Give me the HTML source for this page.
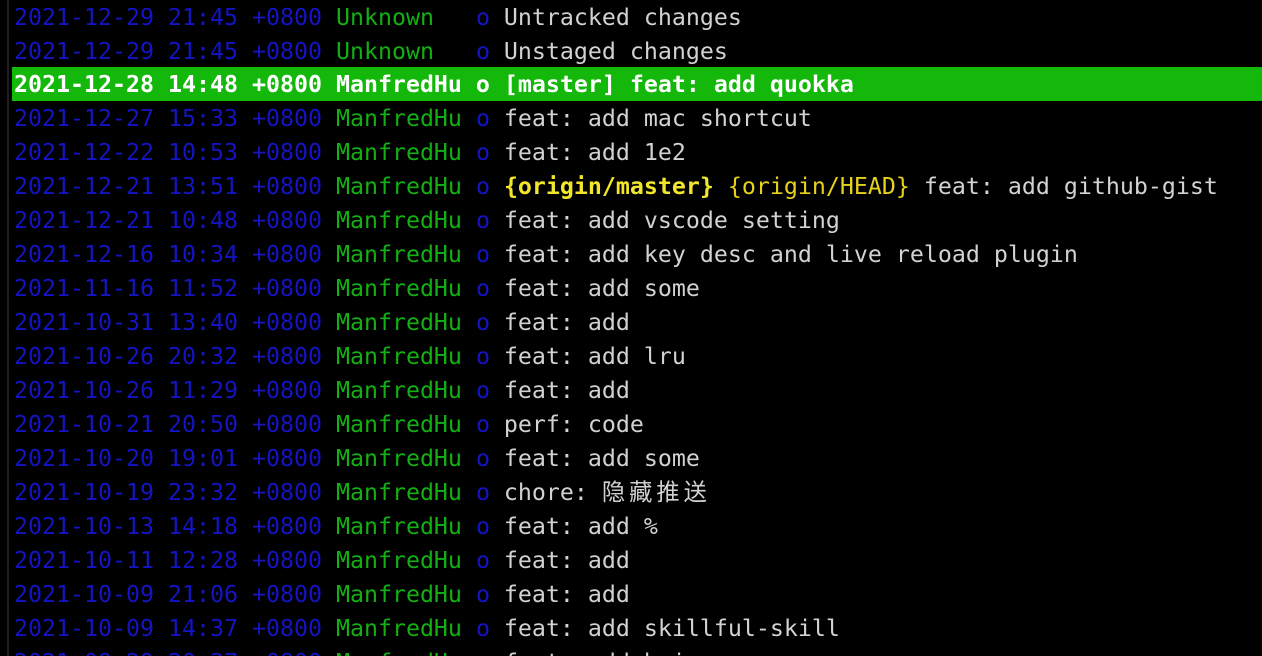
<!DOCTYPE html>
<html><head><meta charset="utf-8"><style>
html,body{margin:0;padding:0;background:#000;width:1262px;height:656px;overflow:hidden}
body{font-family:"DejaVu Sans Mono","Liberation Mono","Noto Sans CJK SC",monospace;font-size:23.25px;position:relative}
.bar{position:absolute;left:7px;top:0;width:2px;height:656px;background:#1e1e1e}
.r{position:absolute;left:14px;height:34px;line-height:36px;white-space:pre;color:#d2d2d2}
.d{color:#1414c4}.a{color:#12b012}.o{color:#1414c4}.y{color:#e6d21a}.yb{color:#f2e62a;font-weight:bold}
.h{left:12px;right:0;padding-left:2px;background:#13b80b;color:#fff;font-weight:bold;line-height:35px}
.cjk{letter-spacing:4px}
</style></head><body>
<div class="bar"></div>
<div class="r" style="top:0"><span class="d">2021-12-29 21:45 +0800</span> <span class="a">Unknown  </span> <span class="o">o</span> Untracked changes</div>
<div class="r" style="top:34px"><span class="d">2021-12-29 21:45 +0800</span> <span class="a">Unknown  </span> <span class="o">o</span> Unstaged changes</div>
<div class="r h" style="top:67px">2021-12-28 14:48 +0800 ManfredHu o [master] feat: add quokka</div>
<div class="r" style="top:101px"><span class="d">2021-12-27 15:33 +0800</span> <span class="a">ManfredHu</span> <span class="o">o</span> feat: add mac shortcut</div>
<div class="r" style="top:135px"><span class="d">2021-12-22 10:53 +0800</span> <span class="a">ManfredHu</span> <span class="o">o</span> feat: add 1e2</div>
<div class="r" style="top:169px"><span class="d">2021-12-21 13:51 +0800</span> <span class="a">ManfredHu</span> <span class="o">o</span> <span class="yb">{origin/master}</span> <span class="y">{origin/HEAD}</span> feat: add github-gist</div>
<div class="r" style="top:203px"><span class="d">2021-12-21 10:48 +0800</span> <span class="a">ManfredHu</span> <span class="o">o</span> feat: add vscode setting</div>
<div class="r" style="top:237px"><span class="d">2021-12-16 10:34 +0800</span> <span class="a">ManfredHu</span> <span class="o">o</span> feat: add key desc and live reload plugin</div>
<div class="r" style="top:271px"><span class="d">2021-11-16 11:52 +0800</span> <span class="a">ManfredHu</span> <span class="o">o</span> feat: add some</div>
<div class="r" style="top:305px"><span class="d">2021-10-31 13:40 +0800</span> <span class="a">ManfredHu</span> <span class="o">o</span> feat: add</div>
<div class="r" style="top:339px"><span class="d">2021-10-26 20:32 +0800</span> <span class="a">ManfredHu</span> <span class="o">o</span> feat: add lru</div>
<div class="r" style="top:373px"><span class="d">2021-10-26 11:29 +0800</span> <span class="a">ManfredHu</span> <span class="o">o</span> feat: add</div>
<div class="r" style="top:407px"><span class="d">2021-10-21 20:50 +0800</span> <span class="a">ManfredHu</span> <span class="o">o</span> perf: code</div>
<div class="r" style="top:441px"><span class="d">2021-10-20 19:01 +0800</span> <span class="a">ManfredHu</span> <span class="o">o</span> feat: add some</div>
<div class="r" style="top:475px"><span class="d">2021-10-19 23:32 +0800</span> <span class="a">ManfredHu</span> <span class="o">o</span> chore: <span class="cjk">隐藏推送</span></div>
<div class="r" style="top:509px"><span class="d">2021-10-13 14:18 +0800</span> <span class="a">ManfredHu</span> <span class="o">o</span> feat: add %</div>
<div class="r" style="top:543px"><span class="d">2021-10-11 12:28 +0800</span> <span class="a">ManfredHu</span> <span class="o">o</span> feat: add</div>
<div class="r" style="top:577px"><span class="d">2021-10-09 21:06 +0800</span> <span class="a">ManfredHu</span> <span class="o">o</span> feat: add</div>
<div class="r" style="top:611px"><span class="d">2021-10-09 14:37 +0800</span> <span class="a">ManfredHu</span> <span class="o">o</span> feat: add skillful-skill</div>
<div class="r" style="top:645px"><span class="d">2021-09-29 20:37 +0800</span> <span class="a">ManfredHu</span> <span class="o">o</span> feat: add hoi</div>
</body></html>
